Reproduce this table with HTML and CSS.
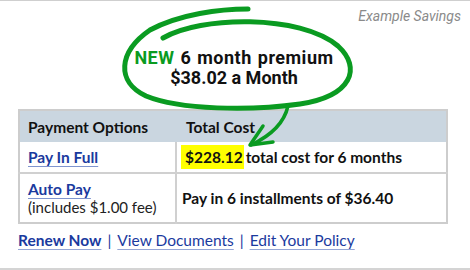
FILE: index.html
```html
<!DOCTYPE html>
<html>
<head>
<meta charset="utf-8">
<link rel="stylesheet" href="styles.css">
</head>
<body>
<div class="card">
  <div class="tag">Example Savings</div>
  <div class="promo">
    <div class="line1"><span class="new">NEW</span> 6 month premium</div>
    <div>$38.02 a Month</div>
  </div>
  <table class="costs">
    <thead>
      <tr><th class="c1">Payment Options</th><th class="c2">Total Cost</th></tr>
    </thead>
    <tbody>
      <tr class="r1">
        <td class="c1"><a class="opt" href="#">Pay In Full</a></td>
        <td class="c2"><span class="hl">$228.12</span>total cost for 6 months</td>
      </tr>
      <tr class="r2">
        <td class="c1"><a class="opt" href="#">Auto Pay</a><div class="fee">(includes $1.00 fee)</div></td>
        <td class="c2">Pay in 6 installments of $36.40</td>
      </tr>
    </tbody>
  </table>
  <div class="links">
    <a class="strong" href="#">Renew Now</a><span class="sep">|</span><a href="#">View Documents</a><span class="sep">|</span><a href="#">Edit Your Policy</a>
  </div>
  <svg class="circle" width="470" height="270" viewBox="0 0 470 270">
    <path d="M163,38 C200,16 300,14 338,46 C362,68 352,96 300,104 C250,111 180,110 146,96 C116,82 118,52 150,30 C180,14 220,9 248,9" fill="none" stroke="#0a9b21" stroke-width="5" stroke-linecap="round"/>
    <path d="M288,106 C284,124 268,137 251,145" fill="none" stroke="#0a9b21" stroke-width="3.5" stroke-linecap="round"/>
    <path d="M263,126 L250,145 L273,142" fill="none" stroke="#0a9b21" stroke-width="3.5" stroke-linecap="round" stroke-linejoin="round"/>
  </svg>
</div>
</body>
</html>
```
FILE: styles.css
```css
html, body {
  margin: 0;
  padding: 0;
  background: #fff;
}
.card {
  position: relative;
  width: 470px;
  height: 270px;
  box-sizing: border-box;
  border-top: 1px solid #cfcfcf;
  border-bottom: 2px solid #d4d4d4;
  font-family: Lato, "Liberation Sans", sans-serif;
  color: #111;
}
.tag {
  padding-top: 7px;
  padding-right: 9px;
  text-align: right;
  font-family: Roboto, sans-serif;
  font-style: italic;
  font-size: 14px;
  line-height: 16px;
  color: #8a8a8a;
}
.promo {
  margin-top: 24px;
  text-align: center;
  font-family: Roboto, sans-serif;
  font-weight: 700;
  font-size: 18px;
  line-height: 20px;
  color: #111;
  width: 468px;
}
.line1 {
  letter-spacing: 0.5px;
  word-spacing: 1px;
}
.new {
  color: #0a9b21;
}
.costs {
  margin-top: 21px;
  margin-left: 18px;
  width: 430px;
  border-collapse: collapse;
  border: 2px solid #cdcdcd;
  font-size: 15.5px;
}
.costs th {
  background: #cad6e0;
  text-align: left;
  font-weight: 700;
  height: 31px;
  padding: 0 0 0 8px;
}
.costs th.c2 {
  padding-left: 10px;
}
.costs td {
  padding: 0 0 0 8px;
  vertical-align: middle;
  font-weight: 700;
}
.costs td.c1 {
  width: 147px;
  border-right: 2px solid #d0d0d0;
}
.costs td.c2 {
  padding-left: 5px;
}
.costs th.c1 {
  width: 147px;
}
.r1 td {
  height: 30px;
  border-bottom: 2px solid #d0d0d0;
}
.r2 td {
  height: 48px;
}
.opt {
  color: #1a3a9e;
  text-decoration: underline;
  text-decoration-color: #7f95cf;
  text-underline-offset: 3px;
}
.fee {
  font-weight: 400;
  font-size: 15px;
  color: #222;
  line-height: 18px;
}
.hl {
  background: #ffff00;
  padding: 3px 1px 3px 4px;
  margin-left: -1px;
  margin-right: 2px;
}
.links {
  margin-top: 6px;
  margin-left: 18px;
  font-size: 15.5px;
  line-height: 20px;
  color: #1a3a9e;
}
.links a {
  color: #1a3a9e;
  text-decoration: underline;
  text-decoration-color: #95a6d6;
  text-underline-offset: 3px;
}
.links a.strong {
  font-weight: 700;
}
.sep {
  margin: 0 6px;
  color: #1a3a9e;
}
.circle {
  position: absolute;
  left: 0;
  top: -1px;
  pointer-events: none;
}
```
